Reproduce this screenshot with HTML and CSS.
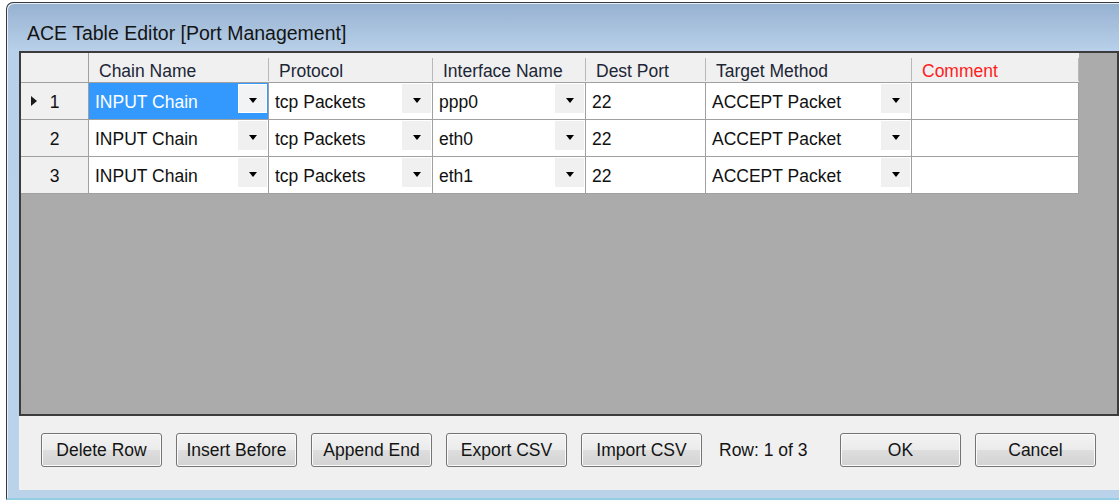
FILE: index.html
```html
<!DOCTYPE html>
<html lang="en">
<head>
<meta charset="utf-8">
<title>ACE Table Editor</title>
<link rel="stylesheet" href="styles.css">
</head>
<body>
<div class="window">
  <div class="titlebar">ACE Table Editor [Port Management]</div>
  <div class="client">
    <div class="grid">
      <div class="table">
        <div class="hcell corner"></div>
        <div class="hcell">Chain Name</div>
        <div class="hcell">Protocol</div>
        <div class="hcell">Interface Name</div>
        <div class="hcell">Dest Port</div>
        <div class="hcell">Target Method</div>
        <div class="hcell comment">Comment</div>

        <div class="cell rowhead current">1</div>
        <div class="cell combo selected"><span class="val">INPUT Chain</span><span class="drop"><svg width="8" height="5" viewBox="0 0 8 5"><path d="M0 0H8L4 5Z"/></svg></span></div>
        <div class="cell combo"><span class="val">tcp Packets</span><span class="drop"><svg width="8" height="5" viewBox="0 0 8 5"><path d="M0 0H8L4 5Z"/></svg></span></div>
        <div class="cell combo"><span class="val">ppp0</span><span class="drop"><svg width="8" height="5" viewBox="0 0 8 5"><path d="M0 0H8L4 5Z"/></svg></span></div>
        <div class="cell"><span class="val">22</span></div>
        <div class="cell combo"><span class="val">ACCEPT Packet</span><span class="drop"><svg width="8" height="5" viewBox="0 0 8 5"><path d="M0 0H8L4 5Z"/></svg></span></div>
        <div class="cell"></div>

        <div class="cell rowhead">2</div>
        <div class="cell combo"><span class="val">INPUT Chain</span><span class="drop"><svg width="8" height="5" viewBox="0 0 8 5"><path d="M0 0H8L4 5Z"/></svg></span></div>
        <div class="cell combo"><span class="val">tcp Packets</span><span class="drop"><svg width="8" height="5" viewBox="0 0 8 5"><path d="M0 0H8L4 5Z"/></svg></span></div>
        <div class="cell combo"><span class="val">eth0</span><span class="drop"><svg width="8" height="5" viewBox="0 0 8 5"><path d="M0 0H8L4 5Z"/></svg></span></div>
        <div class="cell"><span class="val">22</span></div>
        <div class="cell combo"><span class="val">ACCEPT Packet</span><span class="drop"><svg width="8" height="5" viewBox="0 0 8 5"><path d="M0 0H8L4 5Z"/></svg></span></div>
        <div class="cell"></div>

        <div class="cell rowhead">3</div>
        <div class="cell combo"><span class="val">INPUT Chain</span><span class="drop"><svg width="8" height="5" viewBox="0 0 8 5"><path d="M0 0H8L4 5Z"/></svg></span></div>
        <div class="cell combo"><span class="val">tcp Packets</span><span class="drop"><svg width="8" height="5" viewBox="0 0 8 5"><path d="M0 0H8L4 5Z"/></svg></span></div>
        <div class="cell combo"><span class="val">eth1</span><span class="drop"><svg width="8" height="5" viewBox="0 0 8 5"><path d="M0 0H8L4 5Z"/></svg></span></div>
        <div class="cell"><span class="val">22</span></div>
        <div class="cell combo"><span class="val">ACCEPT Packet</span><span class="drop"><svg width="8" height="5" viewBox="0 0 8 5"><path d="M0 0H8L4 5Z"/></svg></span></div>
        <div class="cell"></div>
      </div>
    </div>
    <div class="actions">
      <button class="btn">Delete Row</button>
      <button class="btn">Insert Before</button>
      <button class="btn">Append End</button>
      <button class="btn">Export CSV</button>
      <button class="btn">Import CSV</button>
      <span class="rowinfo">Row: 1 of 3</span>
      <button class="btn">OK</button>
      <button class="btn">Cancel</button>
    </div>
  </div>
</div>
</body>
</html>
```
FILE: styles.css
```css
html, body {
  margin: 0;
  padding: 0;
  background: #ffffff;
  overflow: hidden;
  font-family: "Liberation Sans", Arial, sans-serif;
}

/* Outer window frame; its right side continues past the edge of the view */
.window {
  margin: 2px 0 0 6px;
  width: 1112px;
  border-top: 1px solid #3a3a3a;
  border-left: 1px solid #3a3a3a;
  border-bottom: 2px solid #93cfe2;
  border-top-left-radius: 7px;
  padding-bottom: 8px;
  background: linear-gradient(to bottom, #96b1d1 0px, #b8d0e9 48px, #bad2ea 100%);
  box-shadow: inset 1px 1px 0 #e6eef7;
}

.titlebar {
  height: 48px;
  box-sizing: border-box;
  padding: 18px 0 0 20px;
  line-height: 24px;
  font-size: 19.5px;
  color: #141414;
}

.client {
  margin-left: 12px;
  height: 439px;
  background: #f0f0f0;
}

/* Data grid */
.grid {
  width: 1100px;
  height: 365px;
  box-sizing: border-box;
  border: 2px solid #3c3c3c;
  background: #ababab;
}

.table {
  display: grid;
  grid-template-columns: 68px 180px 164px 153px 120px 206px 167px;
  grid-template-rows: 30px 37px 37px 37px;
  width: max-content;
}

.hcell {
  position: relative;
  background: #f0f0f0;
  border-bottom: 1px solid #a0a0a0;
  box-sizing: border-box;
  display: flex;
  align-items: center;
  padding: 7px 0 0 10px;
  font-size: 17.5px;
  color: #1c2636;
}

.hcell::after {
  content: "";
  position: absolute;
  right: 0;
  top: 5px;
  bottom: 1px;
  width: 1px;
  background: #b8b8b8;
}

.hcell.corner::after {
  top: 0;
  bottom: 0;
  background: #a0a0a0;
}

.hcell.comment {
  color: #ff1c1c;
}

.cell {
  background: #ffffff;
  border-right: 1px solid #a0a0a0;
  border-bottom: 1px solid #a0a0a0;
  box-sizing: border-box;
  display: flex;
  align-items: center;
  padding-left: 6px;
  font-size: 17.5px;
  color: #111111;
}

.cell .val {
  flex: 1;
  padding-top: 2px;
  white-space: nowrap;
}

.cell .drop {
  align-self: flex-start;
  width: 29px;
  height: 29px;
  margin: 1px 1px 0 0;
  background: #f0f0f0;
  display: flex;
  align-items: center;
  justify-content: center;
  padding-top: 3px;
  box-sizing: border-box;
}

.cell .drop svg {
  display: block;
  fill: #000000;
}

.cell.selected {
  background: #3399ff;
  color: #ffffff;
}

.cell.selected .drop {
  background: #f2f3f5;
  box-shadow: inset 0 0 0 1px #ffffff;
}

.cell.rowhead {
  position: relative;
  background: #f0f0f0;
  justify-content: center;
  padding: 2px 0 0 0;
}

/* current-row marker */
.cell.rowhead.current::before {
  content: "";
  position: absolute;
  left: 10px;
  top: 13px;
  border-left: 6px solid #1a1a1a;
  border-top: 5px solid transparent;
  border-bottom: 5px solid transparent;
}

/* Bottom button bar */
.actions {
  display: flex;
  align-items: center;
  gap: 14px;
  padding: 17px 0 0 22px;
}

.btn {
  width: 121px;
  height: 34px;
  box-sizing: border-box;
  border: 1px solid #747474;
  border-radius: 3px;
  background: linear-gradient(to bottom, #f3f3f3 0%, #ebebeb 50%, #dedede 50%, #d2d2d2 100%);
  box-shadow: inset 0 0 0 1px #fafafa;
  font-family: "Liberation Sans", Arial, sans-serif;
  font-size: 17.5px;
  color: #141414;
  padding: 0;
}

.rowinfo {
  width: 110px;
  box-sizing: border-box;
  padding-left: 3px;
  font-size: 17.5px;
  color: #141414;
}
```
